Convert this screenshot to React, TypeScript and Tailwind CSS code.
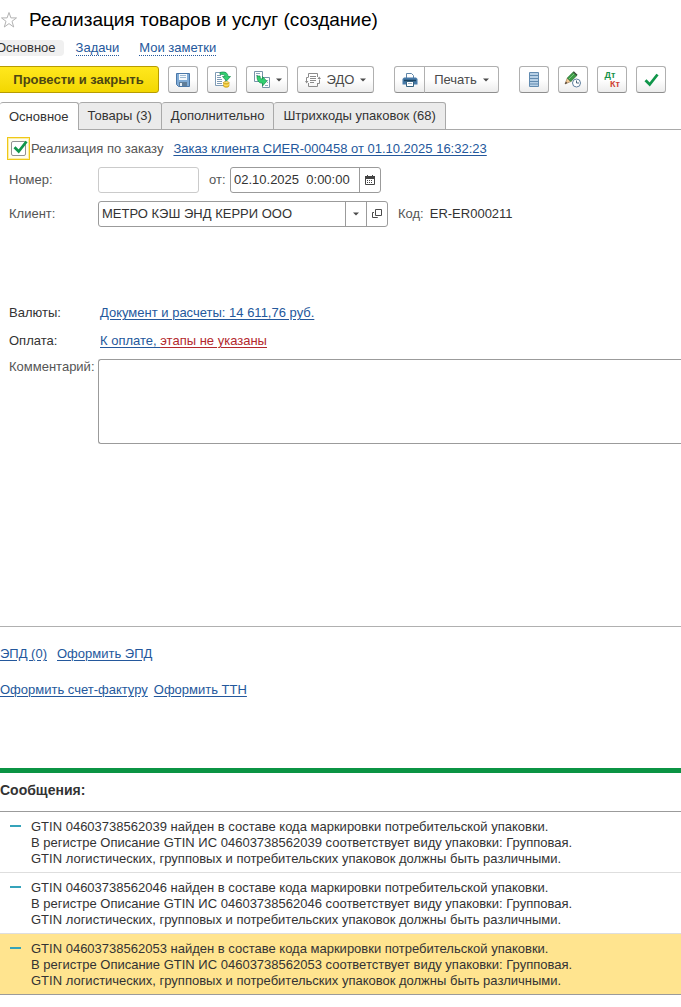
import React from "react"
import clsx from "clsx"

interface ChildrenProps {
  children?: React.ReactNode
  className?: string
}

interface ToolButtonProps extends ChildrenProps {
  label: string
}

const tabs = ["Основное", "Товары (3)", "Дополнительно", "Штрихкоды упаковок (68)"]

const gtins = ["04603738562039", "04603738562046", "04603738562053"]

const Link = ({ children, className }: ChildrenProps) => (
  <a href="#" className={clsx("text-[#24589c] underline underline-offset-2", className)}>
    {children}
  </a>
)

const ToolButton = ({ label, children, className }: ToolButtonProps) => (
  <button
    type="button"
    aria-label={label}
    className={clsx(
      "flex h-[27px] shrink-0 items-center justify-center rounded-[3px] border border-[#b0b0b0] border-b-[#8e8e8e] bg-linear-to-b from-white from-50% to-[#ececec] text-[#4a4a4a]",
      className ?? "w-[30px]"
    )}
  >
    {children}
  </button>
)

const Caret = () => (
  <svg width="6" height="4" viewBox="0 0 6 4" className="shrink-0" fill="#4a4a4a">
    <path d="M0 .5h6L3 3.500z" />
  </svg>
)

const StarIcon = () => (
  <svg width="18" height="18" viewBox="0 0 18 18" fill="none" stroke="#b2b2b2">
    <path d="M9 1.500l1.900 5.400h5.600l-4.500 3.400 1.700 5.700L9 12.600 4.300 16 6 10.300 1.500 6.900h5.600z" />
  </svg>
)

const SaveIcon = () => (
  <svg width="16" height="16" viewBox="0 0 16 16">
    <path d="M1.500 1.500h13v13h-11l-2-2z" fill="#7fabd6" stroke="#4a77a8" />
    <path d="M4 2h8v6H4z" fill="#f5f9fc" />
    <path d="M5 3.500h6M5 5.500h6" stroke="#9db9d2" />
    <path d="M4 10h8v4H4z" fill="#5f7d99" />
    <path d="M5 11h2v3H5z" fill="#e5eef5" />
  </svg>
)

const PostIcon = () => (
  <svg width="17" height="17" viewBox="0 0 17 17">
    <path d="M1.500 1.500h10v13h-10z" fill="#fff" stroke="#7e9bb5" />
    <path d="M3 4.500h4M3 6.500h4M3 8.500h5M3 10.500h5M3 12.500h5" stroke="#7e9bb5" />
    <path d="M6 1.500c5-1.500 8 .5 8 4h2.500L12.500 10 8.500 5.500H11C11 4 9 3 6 3.500z" fill="#32cf6f" stroke="#148b49" strokeWidth=".7" />
    <path d="M9.500 11.500V15c0 1.800 5.500 1.800 5.500 0v-3.500z" fill="#efc52c" stroke="#c1940f" strokeWidth=".6" />
    <ellipse cx="12.200" cy="11.500" rx="2.800" ry="1" fill="#fbe77d" stroke="#c1940f" strokeWidth=".6" />
    <path d="M9.500 13.500c1 1.200 4.500 1.200 5.500 0" fill="none" stroke="#fff1a4" strokeWidth=".7" />
  </svg>
)

const CreateFromIcon = () => (
  <svg width="17" height="17" viewBox="0 0 17 17">
    <path d="M1.500.5h8v10h-8zM9.500 6.500h7v10h-7z" fill="#fff" stroke="#7893aa" />
    <path d="M3 2.500h4M3 4.500h2M13 9.500h2M14 11.500h1M12 14.500h3" stroke="#8ea8bd" />
    <path d="M4 5h3c0 2 .7 3 2.500 3V5.500l4.300 4.700-4.300 4.800v-2.800C6 12.200 4 10 4 5z" fill="#32cf6f" stroke="#148b49" strokeWidth=".7" />
  </svg>
)

const EdoIcon = () => (
  <svg width="16" height="16" viewBox="0 0 16 16" fill="none" stroke="#8b8b8b">
    <path d="M3.500 5V1.500h9V5M3.500 11v3.500h9V11" />
    <path d="M5 4.500h6M5 6.500h6M5 8.500h6M5 10.500h4" />
    <path d="M3.500 5.500h-2v4M12.500 11.500h2v-4" />
    <path d="M0 9h3.500L1.600 11.500zM12.500 7H16l-1.800-2.500z" fill="#8b8b8b" stroke="none" />
  </svg>
)

const PrintIcon = () => (
  <svg width="16" height="16" viewBox="0 0 16 16">
    <path d="M4.500 6.500v-5h5l2 2v3" fill="#fff" stroke="#5f86a8" />
    <path d="M2 5.500h12l1.500 1.500v5.500H.5V7z" fill="#4679a7" />
    <path d="M2 8.500h12" stroke="#17405f" strokeWidth="1.500" />
    <path d="M4.500 9.500h7v5h-7z" fill="#fff" stroke="#35617f" />
    <path d="M6 11.500h4" stroke="#9db4c6" />
  </svg>
)

const RegisterIcon = () => (
  <svg width="10" height="15" viewBox="0 0 10 15">
    <path d="M.5.5h9v14h-9z" fill="#b7d0e6" stroke="#628bb0" />
    <path d="M1 3.500h8M1 6.500h8M1 9.500h8M1 12h8" stroke="#628bb0" />
  </svg>
)

const PencilClockIcon = () => (
  <svg width="18" height="17" viewBox="0 0 18 17">
    <path d="M1 13l2.300-6L6.800 10.500z" fill="#f1c894" stroke="#8e6b46" strokeWidth=".6" />
    <path d="M1 13l.9-2.300 1.400 1.400z" fill="#333" />
    <path d="M3.300 7L9.500.8l3.600 3.500-6.300 6.200z" fill="#3c9b47" stroke="#266c31" strokeWidth=".7" />
    <path d="M4.800 8.200L10.800 2.200" stroke="#7acb7e" />
    <path d="M9 1.300L10 .4l3.500 3.400-1 1z" fill="#3b4a3c" />
    <circle cx="12.500" cy="12" r="4" fill="#fff" stroke="#5f7f9f" />
    <path d="M12.500 9.500V12H15" fill="none" stroke="#49677f" />
  </svg>
)

const CheckIcon = () => (
  <svg width="15" height="14" viewBox="0 0 15 14" fill="none" stroke="#10964a" strokeWidth="2.800">
    <path d="M1.500 7.200l4.200 4.300L13.500 1.500" />
  </svg>
)

const CalendarIcon = () => (
  <svg width="10" height="10" viewBox="0 0 10 10">
    <path d="M.5 2.500h9v7h-9z" fill="#fff" stroke="#444" />
    <path d="M0 1h10v3H0zM2 0h1v2H2zM7 0h1v2H7z" fill="#444" />
    <path d="M2 5.500h6M2 7.500h6" stroke="#444" strokeDasharray="1 1" />
  </svg>
)

const OpenIcon = () => (
  <svg width="10" height="10" viewBox="0 0 10 10" fill="none" stroke="#4a4a4a">
    <path d="M3.500.5h6v6h-6z" />
    <path d="M2 3.500H.5v5h5V8" />
  </svg>
)

const Header = () => (
  <header>
    <div className="flex h-10 items-center gap-[11px]">
      <button type="button" aria-label="Избранное">
        <StarIcon />
      </button>
      <h1 className="text-[19px] leading-6 whitespace-nowrap text-black">Реализация товаров и услуг (создание)</h1>
    </div>
    <nav className="-ml-1 flex h-4 items-center gap-5">
      <a href="#" className="-mr-2 rounded-sm bg-[#f0f0f0] pr-2 leading-4">Основное</a>
      <a href="#" className="border-b border-dotted border-[#24589c] leading-[14px] text-[#24589c]">Задачи</a>
      <a href="#" className="border-b border-dotted border-[#24589c] leading-[14px] text-[#24589c]">Мои заметки</a>
    </nav>
  </header>
)

const Toolbar = () => (
  <div className="mt-[10px] flex gap-[9px]">
    <button
      type="button"
      className="-ml-1 h-[27px] w-[163px] shrink-0 rounded-[3px] border border-[#b79c00] bg-linear-to-b from-[#ffe81c] to-[#f3d700] pl-0.5 font-bold whitespace-nowrap text-[#4d4612]"
    >
      Провести и закрыть
    </button>
    <ToolButton label="Записать"><SaveIcon /></ToolButton>
    <ToolButton label="Провести"><PostIcon /></ToolButton>
    <ToolButton label="Создать на основании" className="w-[42px] gap-1.5"><CreateFromIcon /><Caret /></ToolButton>
    <ToolButton label="ЭДО" className="w-[77px] gap-1.5"><EdoIcon />ЭДО<Caret /></ToolButton>
    <div className="ml-[11px] flex">
      <ToolButton label="Напечатать" className="w-[31px] rounded-r-none"><PrintIcon /></ToolButton>
      <ToolButton label="Печать" className="-ml-px w-[75px] gap-1.5 rounded-l-none">Печать<Caret /></ToolButton>
    </div>
    <ToolButton label="Движения документа" className="ml-[11px] w-[30px]"><RegisterIcon /></ToolButton>
    <ToolButton label="История изменений"><PencilClockIcon /></ToolButton>
    <ToolButton label="Проводки">
      <span className="grid text-[9px] leading-[9px] font-bold">
        <span className="pr-1 text-[#18924a]">Дт</span>
        <span className="pl-1.5 text-[#cf4234]">Кт</span>
      </span>
    </ToolButton>
    <ToolButton label="Проверить"><CheckIcon /></ToolButton>
  </div>
)

const Tabs = () => (
  <div role="tablist" className="mt-[9px] flex h-7 border-b border-[#a9a9a9]">
    {tabs.map((tab, i) => (
      <button
        key={tab}
        type="button"
        role="tab"
        aria-selected={i === 0}
        className={clsx(
          "-mb-px shrink-0 rounded-t-[3px] border-t border-r border-[#a9a9a9] px-[9px] whitespace-nowrap",
          i === 0 ? "bg-white" : "border-b bg-[#ebebeb]"
        )}
      >
        {tab}
      </button>
    ))}
  </div>
)

const DocumentForm = () => (
  <form className="pl-[9px]">
    <div className="mt-[7px] flex h-[23px] items-center text-[#555]">
      <span className="relative -ml-0.5 grid size-[23px] place-items-center border border-[#f0c818] bg-[#fffdf0] outline -outline-offset-2 outline-[#fbeea6]">
        <input id="by-order" type="checkbox" defaultChecked className="size-[15px] appearance-none rounded-xs border border-[#929292] bg-white" />
        <span className="pointer-events-none absolute top-[2px] left-[5px]"><CheckIcon /></span>
      </span>
      <label htmlFor="by-order" className="mr-[10px] ml-px">Реализация по заказу</label>
      <Link>Заказ клиента СИER-000458 от 01.10.2025 16:32:23</Link>
    </div>
    <div className="mt-[7px] flex h-[26px] items-center">
      <label htmlFor="number" className="w-[89px] text-[#555]">Номер:</label>
      <input id="number" className="h-[26px] w-[101px] rounded-[3px] border border-[#cbcbcb]" />
      <label htmlFor="date" className="mx-2.5 w-[11px] text-[#555]">от:</label>
      <div className="flex h-[26px] w-[151px] rounded-[3px] border border-[#9b9b9b]">
        <input id="date" defaultValue="02.10.2025  0:00:00" className="min-w-0 flex-1 pl-[3px] outline-none" />
        <button type="button" aria-label="Выбрать дату" className="grid w-[21px] place-items-center border-l border-[#9b9b9b]">
          <CalendarIcon />
        </button>
      </div>
    </div>
    <div className="mt-2 flex h-[26px] items-center">
      <label htmlFor="client" className="w-[89px] text-[#555]">Клиент:</label>
      <div className="flex h-[26px] w-[290px] rounded-[3px] border border-[#9b9b9b]">
        <input id="client" defaultValue="МЕТРО КЭШ ЭНД КЕРРИ ООО" className="min-w-0 flex-1 pl-[3px] outline-none" />
        <button type="button" aria-label="Выбрать из списка" className="grid w-[21px] place-items-center border-l border-[#9b9b9b]">
          <Caret />
        </button>
        <button type="button" aria-label="Открыть" className="grid w-[21px] place-items-center border-l border-[#9b9b9b]">
          <OpenIcon />
        </button>
      </div>
      <span className="ml-2.5 text-[#555]">Код:</span>
      <span className="ml-1.5">ER-ER000211</span>
    </div>
    <div className="mt-[78px] flex h-4">
      <span className="w-[91px]">Валюты:</span>
      <Link>Документ и расчеты: 14 611,76 руб.</Link>
    </div>
    <div className="mt-3 flex h-4">
      <span className="w-[91px]">Оплата:</span>
      <Link>К оплате, <span className="text-[#b3282d] underline">этапы не указаны</span></Link>
    </div>
    <div className="mt-[10px] flex">
      <label htmlFor="comment" className="w-[89px] shrink-0 text-[#555]">Комментарий:</label>
      <textarea id="comment" className="h-[85px] min-w-0 flex-1 resize-none rounded-l-[3px] border border-r-0 border-[#9b9b9b] p-1 outline-none" />
    </div>
  </form>
)

const Messages = () => (
  <section className="mt-[70px] border-t-[5px] border-[#0b9444]">
    <h2 className="flex h-[38px] items-center pb-1 text-[14px] font-bold">Сообщения:</h2>
    <ul className="border-y border-[#9b9b9b]">
      {gtins.map((gtin, i) => (
        <li
          key={gtin}
          className={clsx("flex pt-[7px] pb-[5px] pl-[10px]", i < 2 ? "border-b border-[#dedede]" : "bg-[#ffe48f]")}
        >
          <span className="mt-1.5 h-0.5 w-[11px] shrink-0 bg-[#35a3ba]" />
          <p className="ml-[10px]">
            GTIN {gtin} найден в составе кода маркировки потребительской упаковки.
            <br />
            В регистре Описание GTIN ИС {gtin} соответствует виду упаковки: Групповая.
            <br />
            GTIN логистических, групповых и потребительских упаковок должны быть различными.
          </p>
        </li>
      ))}
    </ul>
  </section>
)

const App = () => {
  return (
    <main className="overflow-x-hidden bg-white font-['Liberation_Sans',Arial,sans-serif] text-[13px] leading-4 text-[#333]">
      <Header />
      <Toolbar />
      <Tabs />
      <DocumentForm />
      <footer className="mt-[182px] border-t border-[#b0b0b0]">
        <div className="mt-[19px] flex gap-[10px]">
          <Link>ЭПД (0)</Link>
          <Link>Оформить ЭПД</Link>
        </div>
        <div className="mt-5 flex gap-1.5">
          <Link>Оформить счет-фактуру</Link>
          <Link>Оформить ТТН</Link>
        </div>
      </footer>
      <Messages />
    </main>
  )
}

export default App
